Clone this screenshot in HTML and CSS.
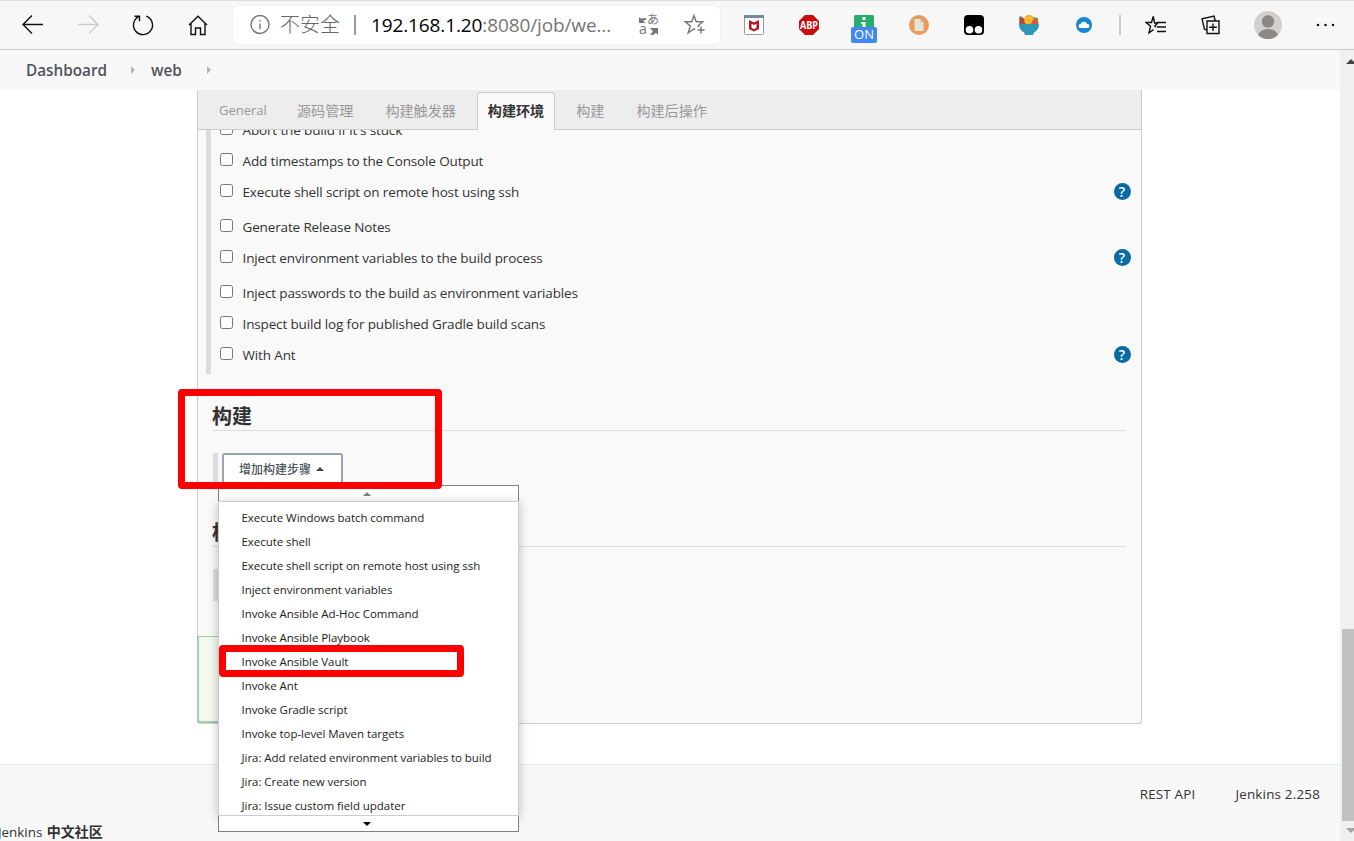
FILE: index.html
```
<!DOCTYPE html>
<html lang="zh-CN">
<head>
  <meta charset="UTF-8">
  <meta name="viewport" content="width=device-width, initial-scale=1.0">
  <title>web Config [Jenkins]</title>
  <link rel="stylesheet" href="styles.css">
</head>
<body>
  <div class="toolbar">
    <svg class="icon back" width="24" height="24" viewBox="0 0 24 24"><path d="M22 11.500H2M11 2.500L2 11.500l9 9"/></svg>
    <svg class="icon forward" width="24" height="24" viewBox="0 0 24 24"><path d="M1 11.500h20M12 2.500l9 9-9 9"/></svg>
    <svg class="icon reload" width="24" height="24" viewBox="0 0 24 24"><path d="M15.300 3.200A9.500 9.500 0 1 1 7.600 3.700M3.500 3.200h5v5"/></svg>
    <svg class="icon home" width="24" height="24" viewBox="0 0 24 24"><path d="M3 12L12 3.200l9 8.800M5 10V21.500h4.500V15h5v6.500H19V10"/></svg>
    <div class="address">
      <svg class="info" width="20" height="20" viewBox="0 0 20 20"><circle cx="10" cy="9.500" r="9"/><path d="M10 8.500V14M10 5v1.600"/></svg>
      <span class="unsafe">不安全</span>
      <span class="bar"></span>
      <span class="url"><b>192.168.1.20</b>:8080/job/we...</span>
      <span class="translate"><svg width="20" height="20" viewBox="0 0 20 20"><path d="M0 2l2 1.500L7 3v2L4 5.500 6.500 8H0zM11 13h8v7l-2-2-3 2h-3l3-3.500z"/></svg><i class="ja">あ</i><i class="latin">a</i></span>
      <svg class="fav" width="22" height="22" viewBox="0 0 22 22"><path d="M12 15.500l-1-.700-5.800 4.200 2.100-7L2.200 7.800h6.600L11 1.500l2.200 6.300h6.600l-4.600 3.900.5 1.500M18 12.500v7M14.500 16h7"/></svg>
    </div>
    <svg class="ext mcafee" width="20" height="20" viewBox="0 0 20 20"><rect x=".5" y=".5" width="19" height="19" rx="1" fill="#fff" stroke="#999"/><path fill="#708b99" d="M0 0h20v3H0z"/><path fill="#b5151c" d="M5 5l5 2.500L15 5v9l-5 2.500L5 14zm2.500 3.700v4l2.500 1.500 2.500-1.500v-4L10 10z"/></svg>
    <svg class="ext abp" width="20" height="20" viewBox="0 0 20 20"><path fill="#c70d0d" d="M6 0h8l6 6v8l-6 6H6l-6-6V6z"/><text x="10" y="13.800" text-anchor="middle" textLength="18" lengthAdjust="spacingAndGlyphs">ABP</text></svg>
    <div class="ext proxy">
      <svg width="20" height="20" viewBox="0 0 20 20"><rect width="20" height="20" rx="1.500" fill="#27ae68"/><path fill="#fff" d="M8.500 2h3v3h-3zM7 7h4.500v7h-3V9H7z"/></svg>
      <span class="on">ON</span>
    </div>
    <svg class="ext doc" width="20" height="20" viewBox="0 0 20 20"><circle cx="10" cy="10" r="10" fill="#e89b5d"/><path fill="#e5e4d8" d="M5.500 4h6l3 3.500V16h-9z"/><path fill="#c4c2b3" d="M11.500 4v3.500h3z"/></svg>
    <svg class="ext monkey" width="20" height="20" viewBox="0 0 20 20"><rect width="20" height="20" rx="4"/><circle cx="5.500" cy="14.800" r="3.800" fill="#fff"/><circle cx="14.500" cy="14.800" r="3.800" fill="#fff"/></svg>
    <svg class="ext bowl" width="20" height="20" viewBox="0 0 20 20"><path fill="#74a545" d="M0 9V2l2-1 8 8z"/><path fill="#b5474c" d="M1 9V2q6 1 8 7z"/><path fill="#74a545" d="M14 2l5 1 .5 6H14z"/><circle cx="10" cy="5" r="5" fill="#f5a51f"/><circle cx="10" cy="5" r="3.600" fill="#fbc63d"/><path stroke="#f5a51f" d="M6 5h8M10 1v8M7.500 2.500l5 5"/><path fill="#d95840" d="M12 9q1-5 6-5l1 5z"/><path fill="#2d98b5" d="M0 9h20q0 6-5 8.500L14 20H6l-1-2.500Q0 15 0 9z"/></svg>
    <svg class="ext cloud" width="20" height="20" viewBox="0 0 20 20"><circle cx="10" cy="10" r="8" fill="#1785cf"/><path fill="#fff" d="M6.500 13a2 2 0 0 1 0-4 3.600 3.600 0 0 1 6.700 0 2 2 0 0 1 .5 4z"/></svg>
    <span class="divider"></span>
    <svg class="icon stars" width="22" height="22" viewBox="0 0 22 22"><path d="M11 13.200L9.800 12l3-3H9.600L8.300 2.300 6.500 8.500H1l4.500 3.800L4 18.800l4.500-3.200M12 8.500h9M12 13h9M12 17.500h9"/></svg>
    <svg class="icon collections" width="22" height="22" viewBox="0 0 22 22"><path d="M7 7h12v12.500H7zM13 9.500V17M9.200 13.200h7.600M7 16l-2.500-.8L2 4.800 14 2l1.200 5"/></svg>
    <svg class="avatar" width="28" height="28" viewBox="0 0 28 28"><circle cx="14" cy="14" r="14" fill="#d2d0cd"/><circle cx="14" cy="10.500" r="6.200" fill="#8c8885"/><path fill="#8c8885" d="M4 24q2.500-6 10-6t10 6q-4 4-10 4T4 24z"/></svg>
    <svg class="more" width="20" height="20" viewBox="0 0 20 20"><circle cx="2" cy="10" r="1.200"/><circle cx="9.500" cy="10" r="1.200"/><circle cx="17" cy="10" r="1.200"/></svg>
  </div>

  <div class="window">
    <div class="page">
      <div class="breadcrumb">
        <a class="dash">Dashboard</a><span class="arrow"></span><a class="job">web</a><span class="arrow"></span>
      </div>

      <div class="config">
        <div class="tabs">
          <div class="tab general">General</div>
          <div class="tab">源码管理</div>
          <div class="tab">构建触发器</div>
          <div class="tab active">构建环境</div>
          <div class="tab">构建</div>
          <div class="tab">构建后操作</div>
        </div>

        <div class="options">
          <div class="row"><input type="checkbox"><label>Abort the build if it's stuck</label></div>
          <div class="row"><input type="checkbox"><label>Add timestamps to the Console Output</label></div>
          <div class="row help"><input type="checkbox"><label>Execute shell script on remote host using ssh</label><span class="q">?</span></div>
          <div class="row"><input type="checkbox"><label>Generate Release Notes</label></div>
          <div class="row help"><input type="checkbox"><label>Inject environment variables to the build process</label><span class="q">?</span></div>
          <div class="row"><input type="checkbox"><label>Inject passwords to the build as environment variables</label></div>
          <div class="row"><input type="checkbox"><label>Inspect build log for published Gradle build scans</label></div>
          <div class="row help"><input type="checkbox"><label>With Ant</label><span class="q">?</span></div>
        </div>

        <h2>构建</h2>
        <div class="step">
          <button class="add">增加构建步骤<span class="up"></span></button>
        </div>
        <h2>构建后操作</h2>
        <div class="step"></div>
        <div class="save-bar"></div>
      </div>

      <div class="footer">
        <div class="links"><a>REST API</a><a>Jenkins 2.258</a></div>
        <div class="community">Jenkins <b>中文社区</b></div>
      </div>
    </div>

    <div class="scrollbar">
      <span class="up"></span>
      <span class="thumb"></span>
      <span class="down"></span>
    </div>
  </div>

  <div class="menu">
    <div class="menu-scroll top"><span class="up"></span></div>
    <ul>
      <li>Execute Windows batch command</li>
      <li>Execute shell</li>
      <li>Execute shell script on remote host using ssh</li>
      <li>Inject environment variables</li>
      <li>Invoke Ansible Ad-Hoc Command</li>
      <li>Invoke Ansible Playbook</li>
      <li>Invoke Ansible Vault</li>
      <li>Invoke Ant</li>
      <li>Invoke Gradle script</li>
      <li>Invoke top-level Maven targets</li>
      <li>Jira: Add related environment variables to build</li>
      <li>Jira: Create new version</li>
      <li>Jira: Issue custom field updater</li>
    </ul>
    <div class="menu-scroll bottom"><span class="down"></span></div>
  </div>

  <div class="mark mark-build"></div>
  <div class="mark mark-vault"></div>
</body>
</html>
```
FILE: styles.css
```
* {
  box-sizing: border-box;
}
body {
  margin: 0;
  height: 841px;
  overflow: hidden;
  position: relative;
  display: flex;
  flex-direction: column;
  font-family: "Open Sans", "Noto Sans CJK SC", sans-serif;
  font-size: 14px;
  color: #333;
  background: #fff;
}

/* browser toolbar */
.toolbar {
  height: 50px;
  flex: none;
  display: flex;
  align-items: center;
  background: #f7f7f7;
  border-bottom: 1px solid #ccc;
  border-top: 1px solid #ddd;
}
.toolbar svg {
  flex: none;
}
.icon {
  fill: none;
  stroke: #111;
  stroke-width: 1.4;
}
.back {
  margin-left: 21px;
}
.forward {
  margin-left: 32px;
  stroke: #ccc;
}
.reload {
  margin-left: 30px;
}
.home {
  margin-left: 31px;
}
.address {
  width: 487px;
  height: 38px;
  margin-left: 23px;
  padding-left: 17px;
  display: flex;
  align-items: center;
  background: #fff;
  border-radius: 5px;
  box-shadow: 0 0 3px rgba(0, 0, 0, 0.06);
}
.info {
  fill: none;
  stroke: #767676;
  stroke-width: 1.4;
}
.unsafe {
  width: 61px;
  margin-left: 10px;
  font-size: 20px;
  font-weight: 300;
  line-height: 30px;
  color: #666;
  white-space: nowrap;
}
.bar {
  width: 2px;
  height: 20px;
  margin-left: 13px;
  background: #999;
}
.url {
  width: 242px;
  margin-left: 15px;
  font-size: 19px;
  letter-spacing: -0.12px;
  color: #767676;
  white-space: nowrap;
}
.url b {
  font-weight: normal;
  color: #000;
}
.translate {
  position: relative;
  width: 20px;
  height: 20px;
  margin-left: 26px;
  color: #767676;
}
.translate svg {
  display: block;
  fill: #767676;
}
.translate i {
  position: absolute;
  font-style: normal;
  line-height: 12px;
}
.translate .ja {
  left: 8px;
  top: -1px;
  font-size: 12px;
}
.translate .latin {
  left: 0;
  top: 8px;
  font-size: 14px;
}
.fav {
  margin-left: 24px;
  fill: none;
  stroke: #767676;
  stroke-width: 1.4;
}
.ext {
  margin-left: 35px;
}
.ext.mcafee {
  margin-left: 24px;
}
.abp text {
  font-size: 10.5px;
  font-weight: 700;
  fill: #fff;
}
.proxy {
  position: relative;
  width: 20px;
  height: 20px;
}
.proxy .on {
  position: absolute;
  left: -3px;
  top: 12px;
  width: 26px;
  height: 16px;
  border-radius: 2px;
  background: #4285f4;
  color: #fff;
  font-size: 13px;
  line-height: 15px;
  text-align: center;
}
.divider {
  width: 2px;
  height: 20px;
  margin-left: 25px;
  background: #ccc;
}
.stars {
  margin-left: 24px;
}
.collections {
  margin-left: 33px;
}
.avatar {
  margin-left: 32px;
}
.more {
  margin-left: 34px;
}

.window {
  flex: 1;
  display: flex;
}
.page {
  width: 1340px;
  display: flex;
  flex-direction: column;
}

/* small triangles */
.up {
  display: inline-block;
  border: 4px solid transparent;
  border-top: 0;
  border-bottom: 4px solid #444;
}
.down {
  display: inline-block;
  border: 4px solid transparent;
  border-bottom: 0;
  border-top: 4px solid #000;
}

.breadcrumb {
  height: 40px;
  padding: 0 0 1px 26px;
  display: flex;
  align-items: center;
  background: #f8f8f8;
  color: #4d545d;
  font-weight: 600;
  font-size: 15.3px;
}
.dash {
  width: 81px;
  white-space: nowrap;
}
.job {
  width: 32px;
}
.arrow {
  margin: 0 16px 0 24px;
  border: 4px solid transparent;
  border-left-color: #b5b5b5;
  border-right: 0;
}

/* job configuration */
.config {
  width: 945px;
  height: 634px;
  margin-left: 197px;
  background: #f9f9f9;
  border: 1px solid #ccc;
  border-top: 0;
  border-radius: 0 0 3px 3px;
}
.tabs {
  height: 40px;
  display: flex;
  align-items: flex-end;
  padding-left: 10px;
  background: #ededed;
  border-bottom: 1px solid #ccc;
}
.tab {
  height: 38px;
  margin: 0 10px -1px 0;
  padding: 0 10px;
  border: 1px solid transparent;
  border-bottom: 0;
  border-radius: 4px 4px 0 0;
  line-height: 35px;
  color: #999;
  font-size: 14.1px;
  white-space: nowrap;
}
.tab.general {
  width: 68px;
  font-size: 13px;
}
.tab.active {
  background: #f9f9f9;
  border-color: #ccc;
  color: #333;
  font-weight: 700;
}
.options {
  height: 244px;
  margin-left: 8px;
  border-left: 5px solid #ddd;
  overflow: hidden;
}
.row {
  height: 31px;
  display: flex;
  align-items: flex-start;
}
.row:first-child {
  margin-top: -16px;
}
.row.help {
  height: 35px;
}
.row input {
  width: 13px;
  height: 13px;
  margin: 8px 9.5px 0 9px;
}
.row label {
  font-size: 13.5px;
  letter-spacing: -0.14px;
  line-height: 32px;
  white-space: nowrap;
}
.q {
  width: 17px;
  height: 17px;
  margin: 6.5px 10.5px 0 auto;
  border-radius: 50%;
  background: #0b6aa2;
  color: #fff;
  font-size: 14px;
  font-weight: 600;
  line-height: 17px;
  text-align: center;
}
h2 {
  height: 30px;
  margin: 27px 15px 22px 14px;
  border-bottom: 1px solid #ddd;
  font-size: 20px;
  line-height: 32px;
}
.step {
  height: 32px;
  margin-left: 15px;
  border-left: 5px solid #ddd;
}
.step + h2 {
  margin-top: 32px;
}
.add {
  width: 121px;
  height: 34px;
  margin-left: 4px;
  padding: 0 2px 2px 0;
  border: 2px solid #98a5ad;
  border-radius: 3px;
  background: #fff;
  color: #4d545d;
  font-family: inherit;
  font-size: 12px;
  font-weight: 500;
}
.add .up {
  margin: 0 0 3px 5px;
}
.save-bar {
  width: 220px;
  height: 87px;
  margin: 35px 0 0 -1px;
  background: #f5f9f0;
  border: 1px solid #a4ccb8;
  border-width: 1px 1px 2px 2px;
  border-radius: 0 0 0 3px;
}

.footer {
  flex: 1;
  margin-top: 40px;
  background: #f8f8f8;
  border-top: 1px solid #e2ebee;
  font-size: 13.4px;
  font-weight: 500;
}
.links {
  display: flex;
  justify-content: flex-end;
  gap: 40px;
  padding: 19px 20px 0 0;
  line-height: 20px;
  letter-spacing: 0.2px;
}
.community {
  margin: 18px 0 0 -2px;
  line-height: 20px;
}
.community b {
  font-size: 14px;
  margin-left: 1px;
}

.scrollbar {
  width: 14px;
  display: flex;
  flex-direction: column;
  align-items: flex-end;
  background: #f0f0f0;
  overflow: hidden;
}
.scrollbar .up {
  margin: 9px -2px 0 0;
  border-width: 0 5px 5px;
}
.scrollbar .thumb {
  width: 12px;
  height: 192px;
  margin-top: 565px;
  background: #c1c1c1;
}
.scrollbar .down {
  margin: 7px -2px 0 0;
  border-width: 5px 5px 0;
  border-top-color: #a3a3a3;
}

/* build step menu */
.menu {
  position: absolute;
  left: 218px;
  top: 485px;
  width: 301px;
}
.menu-scroll {
  height: 16px;
  display: flex;
  align-items: center;
  justify-content: center;
  background: #fff;
  border: 1px solid #808080;
}
.menu-scroll.top {
  border-bottom: 0;
}
.menu-scroll.top .up {
  border-bottom-color: #808080;
  margin-left: -3px;
}
.menu-scroll.bottom {
  border-top: 0;
}
.menu-scroll.bottom .down {
  margin-left: -3px;
}
.menu ul {
  height: 315px;
  margin: 0;
  padding: 4px 0 0;
  list-style: none;
  overflow: hidden;
  background: #fff;
  border: 1px solid #ccc;
  box-shadow: 0 2px 10px rgba(0, 0, 0, 0.25);
}
.menu li {
  height: 24px;
  padding-left: 22.5px;
  font-size: 11.5px;
  letter-spacing: -0.05px;
  line-height: 24px;
  color: #222;
  white-space: nowrap;
}

.mark {
  position: absolute;
  border: 7px solid #f00;
  border-radius: 4px;
}
.mark-build {
  left: 178px;
  top: 389px;
  width: 264px;
  height: 100px;
}
.mark-vault {
  left: 219px;
  top: 645px;
  width: 245px;
  height: 32px;
}
```
